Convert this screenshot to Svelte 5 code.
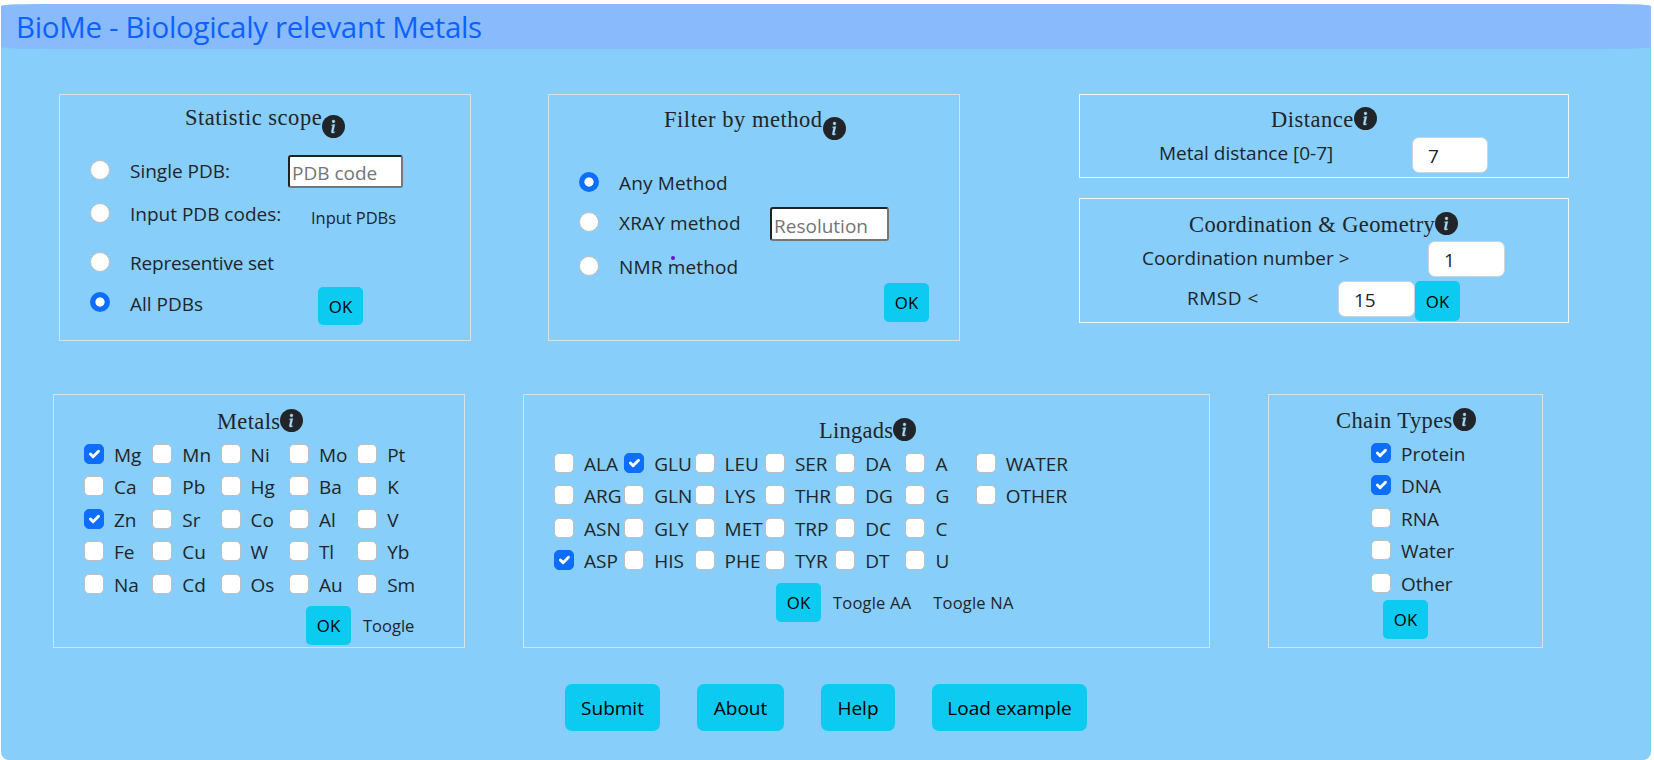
<script>
  const metals = [
    ['Mg', 'Mn', 'Ni', 'Mo', 'Pt'],
    ['Ca', 'Pb', 'Hg', 'Ba', 'K'],
    ['Zn', 'Sr', 'Co', 'Al', 'V'],
    ['Fe', 'Cu', 'W', 'Tl', 'Yb'],
    ['Na', 'Cd', 'Os', 'Au', 'Sm']
  ];
  const ligands = [
    ['ALA', 'GLU', 'LEU', 'SER', 'DA', 'A', 'WATER'],
    ['ARG', 'GLN', 'LYS', 'THR', 'DG', 'G', 'OTHER'],
    ['ASN', 'GLY', 'MET', 'TRP', 'DC', 'C'],
    ['ASP', 'HIS', 'PHE', 'TYR', 'DT', 'U']
  ];
  const chains = [['Protein'], ['DNA'], ['RNA'], ['Water'], ['Other']];
  const checked = new Set(['Mg', 'Zn', 'GLU', 'ASP', 'Protein', 'DNA']);
</script>

{#snippet title(text, cls)}
  <h2 class={cls}>
    <span>{text}</span>
    <svg viewBox="0 0 16 16" aria-hidden="true">
      <circle cx="8" cy="8" r="8" />
      <path d="m8.93 6.588-2.29.287-.082.38.45.083c.294.07.352.176.288.469l-.738 3.468c-.194.897.105 1.319.808 1.319.545 0 1.178-.252 1.465-.598l.088-.416c-.2.176-.492.246-.686.246-.275 0-.375-.193-.304-.533zM9 4.5a1 1 0 1 1-2 0 1 1 0 0 1 2 0z" />
    </svg>
  </h2>
{/snippet}

{#snippet radio(text, on, cls)}
  <label class="choice wide {cls}">
    <i class="mark round" class:on></i><span>{text}</span>
  </label>
{/snippet}

{#snippet checks(rows)}
  <div class="checks">
    {#each rows as row}
      <div class="line">
        {#each row as name}
          <label class="choice">
            <i class="mark" class:on={checked.has(name)}>
              {#if checked.has(name)}
                <svg viewBox="0 0 20 20"><path d="m6 10 3 3 6-6" /></svg>
              {/if}
            </i><span>{name}</span>
          </label>
        {/each}
      </div>
    {/each}
  </div>
{/snippet}

<main>
  <header><h1>BioMe - Biologicaly relevant Metals</h1></header>

  <section class="top">
    <div class="panel scope">
      {@render title('Statistic scope', 'low t-scope')}
      <div class="row r1">
        {@render radio('Single PDB:', false, '')}
        <input class="raw pdb" placeholder="PDB code" />
      </div>
      <div class="row r2">
        {@render radio('Input PDB codes:', false, '')}
        <span class="link">Input PDBs</span>
      </div>
      <div class="row r3">{@render radio('Representive set', false, 'tight')}</div>
      <div class="row r4">
        {@render radio('All PDBs', true, '')}
        <button class="ok">OK</button>
      </div>
    </div>

    <div class="panel method">
      {@render title('Filter by method', 'low t-method')}
      <div class="row m1">{@render radio('Any Method', true, 'loose')}</div>
      <div class="row m2">
        {@render radio('XRAY method', false, 'loose')}
        <input class="raw res" placeholder="Resolution" />
      </div>
      <div class="row m3">{@render radio('NMR method', false, 'loose')}<b class="dot"></b></div>
      <button class="ok">OK</button>
    </div>

    <div class="stack">
      <div class="panel bright distance">
        {@render title('Distance', 't-dist')}
        <div class="row">
          <span class="field">Metal distance [0-7]</span>
          <input class="num" value="7" />
        </div>
      </div>
      <div class="panel bright coord">
        {@render title('Coordination & Geometry', 't-coord')}
        <div class="row c1">
          <span class="field">Coordination number &gt;</span>
          <input class="num" value="1" />
        </div>
        <div class="row c2">
          <span class="field">RMSD &lt;</span>
          <input class="num" value="15" />
          <button class="ok">OK</button>
        </div>
      </div>
    </div>
  </section>

  <section class="middle">
    <div class="panel metals">
      {@render title('Metals', 't-metals')}
      {@render checks(metals)}
      <div class="row actions">
        <button class="ok">OK</button><span class="link">Toogle</span>
      </div>
    </div>
    <div class="panel ligands">
      {@render title('Lingads', 't-lig')}
      {@render checks(ligands)}
      <div class="row actions">
        <button class="ok">OK</button><span class="link">Toogle AA</span><span class="link na">Toogle NA</span>
      </div>
    </div>
    <div class="panel chains">
      {@render title('Chain Types', 't-chain')}
      {@render checks(chains)}
      <button class="ok">OK</button>
    </div>
  </section>

  <footer>
    <button class="submit">Submit</button>
    <button class="about">About</button>
    <button class="help">Help</button>
    <button class="load">Load example</button>
  </footer>
</main>

<style>
  :global(body) {
    background: #fff;
  }
  * {
    box-sizing: border-box;
  }
  main {
    width: 1650px;
    height: 756px;
    margin: 4px 0 0 1px;
    overflow: hidden;
    border-radius: 50px 50px 8px 8px / 2px 2px 8px 8px;
    background: #87cefa;
    color: #212529;
    font: 19px/28px 'Open Sans', 'Noto Sans', sans-serif;
  }
  header {
    height: 45px;
    padding-left: 15px;
    border-radius: 0 0 50px 50px / 0 0 2px 2px;
    background: #88bafc;
  }
  h1 {
    margin: 0;
    color: #0d62ff;
    font-size: 29.5px;
    font-weight: 400;
    line-height: 46px;
    letter-spacing: -0.32px;
    white-space: nowrap;
  }
  .top {
    display: flex;
    height: 300px;
    padding: 45px 0 0 58px;
  }
  .middle {
    display: flex;
    height: 290px;
    margin-top: 45px;
    padding-left: 52px;
  }
  .panel {
    flex: none;
    border: 1px solid #d9e0e6;
  }
  .bright {
    border-color: #eef6fc;
  }
  .scope,
  .method {
    width: 412px;
    height: 247px;
  }
  .method {
    margin-left: 77px;
  }
  .stack {
    display: flex;
    flex-direction: column;
    gap: 20px;
    width: 490px;
    margin-left: 119px;
  }
  .distance {
    height: 84px;
  }
  .coord {
    height: 125px;
  }
  .metals {
    width: 412px;
    height: 254px;
  }
  .ligands {
    width: 687px;
    height: 254px;
    margin-left: 58px;
  }
  .chains {
    width: 275px;
    height: 254px;
    margin-left: 58px;
  }

  h2 {
    display: flex;
    height: 30px;
    margin: 0;
    font: 400 22.5px/30px 'Liberation Serif', serif;
    white-space: nowrap;
  }
  h2 span {
    flex: none;
  }
  h2 svg {
    flex: none;
    width: 23px;
    height: 23px;
    margin-top: 2px;
    fill: #212529;
  }
  h2 path {
    fill: #a5dbfb;
    stroke: #a5dbfb;
    stroke-width: 0.25;
  }
  .low svg {
    margin-top: 12px;
  }
  .t-scope { margin: 8px 0 0 125px; letter-spacing: 0.52px; }
  .t-scope span { width: 137px; }
  .t-method { margin: 10px 0 0 115px; letter-spacing: 0.54px; }
  .t-method span { width: 159px; }
  .t-dist { margin: 10px 0 0 191px; letter-spacing: 0.5px; }
  .t-dist span { width: 83px; }
  .t-coord { margin: 11px 0 0 109px; letter-spacing: 0.38px; }
  .t-coord span { width: 246px; }
  .t-metals { margin: 12px 0 0 163px; letter-spacing: 0.35px; }
  .t-metals span { width: 63px; }
  .t-lig { margin: 21px 0 0 295px; letter-spacing: 0.25px; }
  .t-lig span { width: 74px; }
  .t-chain { margin: 11px 0 0 67px; letter-spacing: 0.4px; }
  .t-chain span { width: 117px; }

  .row {
    display: flex;
    align-items: flex-start;
  }
  .choice {
    display: flex;
    white-space: nowrap;
  }
  .choice span {
    margin-left: 10px;
  }
  .wide {
    width: 198px;
    padding-left: 30px;
  }
  .wide span {
    margin-left: 20px;
  }
  .tight {
    letter-spacing: -0.2px;
  }
  .loose {
    letter-spacing: 0.15px;
  }
  .mark {
    flex: none;
    display: block;
    width: 20px;
    height: 20px;
    margin-top: 3px;
    border: 1px solid #bfbfbf;
    border-radius: 5px;
    background: #fff;
  }
  .round {
    border-radius: 50%;
  }
  .mark.on {
    border-color: #0d6efd;
    background: #0d6efd;
  }
  .round.on {
    border: 0;
    background: radial-gradient(circle, #fff 4.2px, #0d6efd 5px);
  }
  .mark svg {
    display: block;
    width: 18px;
    height: 18px;
    fill: none;
    stroke: #fff;
    stroke-width: 3.2;
    stroke-linecap: round;
    stroke-linejoin: round;
  }
  .r1 { height: 43px; margin-top: 24px; }
  .r2 { height: 49px; }
  .r3 { height: 40px; }
  .r4 .choice span { margin-top: 1px; }
  .r1 .choice, .r2 .choice { width: 228px; }
  .m1 { height: 40px; margin-top: 34px; }
  .m2 { height: 44px; }
  .m3 { height: 30px; }
  .m2 .choice { width: 221px; }
  .m3 .choice { width: 122px; }

  .dot {
    width: 4px;
    height: 4px;
    margin-top: 3px;
    border-radius: 50%;
    background: #6a0fce;
  }

  input,
  button {
    font-family: inherit;
    color: inherit;
  }
  .raw {
    border: 2px solid;
    border-color: #212121 #767676 #767676 #212121;
    border-radius: 3px;
    background: #fff;
    font-size: 19px;
    line-height: 28px;
  }
  .raw::placeholder {
    color: #757575;
    opacity: 1;
  }
  .pdb {
    width: 115px;
    height: 33px;
    margin-top: -2px;
    padding: 3px 2px 0;
  }
  .res {
    width: 119px;
    height: 34px;
    margin-top: -2px;
    padding: 4px 2px 0;
  }
  .num {
    width: 76px;
    height: 36px;
    padding: 2px 15px 0;
    border: 1px solid #ced4da;
    border-radius: 7px;
    background: #fff;
    font-size: 19px;
  }
  .field {
    white-space: nowrap;
  }
  .distance .field { width: 253px; margin: 4px 0 0 79px; }
  .distance .num { margin-top: 2px; }
  .c1 { height: 40px; margin-top: 1px; }
  .c1 .field { width: 286px; margin: 3px 0 0 62px; }
  .c1 .num { width: 77px; }
  .c2 .field { width: 151px; margin: 3px 0 0 107px; letter-spacing: 0.5px; }
  .c2 .num { width: 77px; }

  .link {
    font-size: 16.5px;
    line-height: 28px;
    white-space: nowrap;
  }
  .ok {
    flex: none;
    display: block;
    width: 45px;
    height: 39px;
    padding: 0;
    border: 0;
    border-radius: 5px;
    background: #0dcaf0;
    color: #000;
    font-size: 16.8px;
  }
  .r2 .link { margin: 4px 0 0 23px; letter-spacing: -0.05px; }
  .r4 .ok { height: 38px; margin: -2px 0 0 60px; }
  .c2 .ok { height: 40px; }
  .method > .ok { margin-left: 335px; padding-bottom: 1px; }

  .line {
    display: flex;
    height: 32.5px;
  }
  .checks {
    padding: 3.7px 0 0.3px 30px;
  }
  .metals .choice { width: 68.3px; }
  .ligands .choice { width: 70.3px; }
  .chains .checks { padding-left: 102px; }
  .actions { padding-left: 252px; margin-top: 3px; }
  .actions .link { margin: 6px 0 0 12px; }
  .ligands .link { letter-spacing: 0.2px; }
  .actions .na { margin-left: 22px; }
  .chains .ok { margin: -2px 0 0 114px; }

  footer {
    display: flex;
    padding-left: 564px;
  }
  footer button {
    height: 47px;
    padding: 0;
    border: 0;
    border-radius: 7px;
    background: #0dcaf0;
    color: #000;
    font-size: 19px;
  }
  .submit { width: 95px; }
  .about { width: 87px; margin-left: 37px; }
  .help { width: 74px; margin-left: 37px; }
  .load { width: 155px; margin-left: 37px; }
</style>
